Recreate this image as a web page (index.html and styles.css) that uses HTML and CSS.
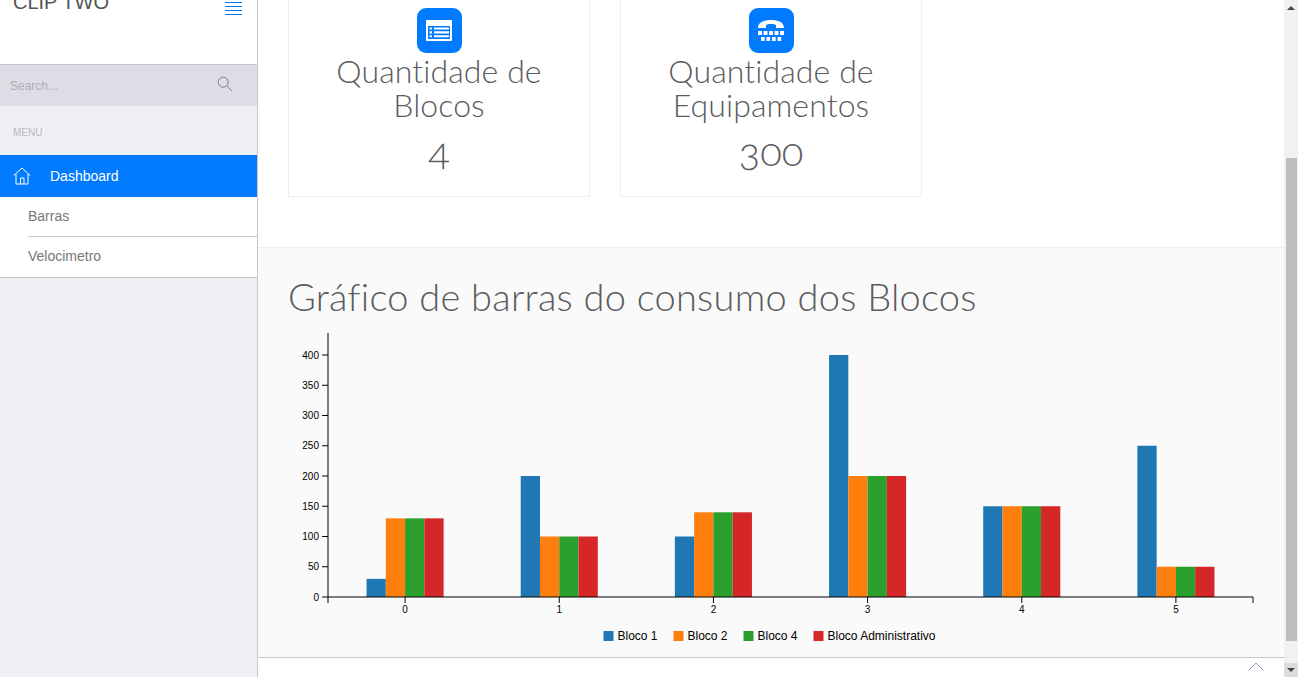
FILE: index.html
```html
<!DOCTYPE html>
<html lang="pt">
<head>
<meta charset="utf-8">
<title>Clip Two</title>
<link rel="stylesheet" href="styles.css">
</head>
<body>
<div class="app">
  <aside class="sidebar">
    <header class="brand">
      <span class="brand-name">CLIP TWO</span>
      <svg class="burger" width="17" height="15" viewBox="0 0 17 15"><path d="M0 .5h17M0 4.500h17M0 8.500h17M0 12.500h17" stroke="#007aff" fill="none"/></svg>
    </header>
    <div class="search">
      <span class="search-text">Search...</span>
      <svg class="search-icon" width="16" height="16" viewBox="0 0 16 16"><circle cx="6.2" cy="6.2" r="5" fill="none" stroke="#7f7f85"/><path d="M9.800 9.800l5 5" stroke="#7f7f85" fill="none"/></svg>
    </div>
    <div class="menu-label">MENU</div>
    <nav class="nav">
      <a class="nav-active">
        <svg class="home" width="18" height="18" viewBox="0 0 18 18"><path d="M.7 8.600L9 1l8.300 7.600M3 7v10h12V7M7.500 17v-6h3.500v6" fill="none" stroke="#fff"/></svg>
        Dashboard
      </a>
      <div class="sub">
        <a class="sub-item sub-first">Barras</a>
        <a class="sub-item">Velocimetro</a>
      </div>
    </nav>
  </aside>

  <main class="main">
    <section class="cards">
      <article class="card">
        <span class="badge">
          <svg width="26" height="21" viewBox="0 0 26 21"><path fill="#fff" fill-rule="evenodd" d="M1 0h24a1 1 0 011 1v19a1 1 0 01-1 1H1a1 1 0 01-1-1V1a1 1 0 011-1zm1 6v13h22V6z"/><path fill="#fff" d="M3.500 7.500H6v2H3.500zM8 7.500h15v2H8zM3.500 11.300H6v2.200H3.500zM8 11.300h15v2.200H8zM3.500 15.300H6v2H3.500zM8 15.300h15v2H8z"/></svg>
        </span>
        <h3 class="card-title">Quantidade de Blocos</h3>
        <p class="card-value">4</p>
      </article>
      <article class="card">
        <span class="badge">
          <svg width="26" height="21" viewBox="0 0 26 21"><path fill="#fff" d="M0 8C0 2 6 0 13 0s13 2 13 8h-8V5.500C18 4.500 16 4 13 4s-5 .5-5 1.500V8z"/><path fill="#fff" d="M0 11h4v4H0zM5.500 11h4v4h-4zM11 11h4v4h-4zM16.500 11h4v4h-4zM22 11h4v4h-4zM3 17h3.700v4H3zM8.500 17h3.700v4H8.500zM14 17h3.700v4H14zM19.500 17h3.700v4h-3.700z"/></svg>
        </span>
        <h3 class="card-title">Quantidade de Equipamentos</h3>
        <p class="card-value">300</p>
      </article>
    </section>

    <section class="chart-section">
      <h2 class="chart-title">Gráfico de barras do consumo dos Blocos</h2>
      <svg class="chart" id="chart" width="1026" height="329" viewBox="258 328 1026 329"></svg>
    </section>

    <footer class="footer">
      <svg width="16" height="9" viewBox="0 0 16 9"><path d="M.5 8.500L8 1l7.500 7.500" fill="none" stroke="#8a9fb5"/></svg>
    </footer>
  </main>

  <div class="scrollbar">
    <div class="scroll-btn"><span class="arrow-up"></span></div>
    <div class="scroll-thumb"></div>
    <div class="scroll-btn scroll-btn-down"><span class="arrow-down"></span></div>
  </div>
</div>
<script src="chart.js"></script>
</body>
</html>
```

FILE: styles.css
```css
* { box-sizing: border-box; }
html, body { margin: 0; height: 100%; overflow: hidden; }
body { font-family: "Liberation Sans", Arial, sans-serif; background: #fff; }
.app { display: flex; width: 1298px; height: 677px; overflow: hidden; }

.sidebar { width: 258px; flex: none; background: #f0eff4; border-right: 1px solid #c8c7cc; display: flex; flex-direction: column; }
.brand { height: 65px; flex: none; background: #fff; border-bottom: 1px solid #c8c7cc; display: flex; justify-content: space-between; align-items: flex-start; padding: 0 15px 0 13px; overflow: hidden; }
.brand-name { font-size: 20px; line-height: 24px; margin-top: -10px; color: #555; font-weight: 400; }
.burger { margin-top: 2px; }
.search { height: 41px; flex: none; background: #dddde5; display: flex; align-items: center; justify-content: space-between; padding: 0 24px 0 10px; }
.search-text { font-size: 12px; color: #aeaeb4; margin-top: 1px; }
.search-icon { margin-top: -4px; }
.menu-label { height: 49px; flex: none; padding: 21px 0 0 13px; font-size: 10px; line-height: 12px; color: #b9b9bd; }
.nav { display: flex; flex-direction: column; }
.nav-active { height: 42px; background: #007aff; color: #fff; font-size: 14px; display: flex; align-items: center; gap: 19px; padding-left: 13px; }
.home { margin-top: -1px; }
.sub { background: #fff; border-bottom: 1px solid #c8c7cc; display: flex; flex-direction: column; padding-left: 28px; }
.sub-item { height: 40px; font-size: 14px; color: #777; display: flex; align-items: center; padding-bottom: 2px; }
.sub-first { border-bottom: 1px solid #c8c7cc; }

.main { flex: 1; min-width: 0; display: flex; flex-direction: column; }
.cards { height: 248px; flex: none; background: #fff; border-bottom: 1px solid #eeeeee; display: flex; gap: 30px; padding: 0 30px; align-items: flex-start; overflow: hidden; }
.card { width: 302px; height: 197px; flex: none; border: 1px solid #eeeeee; border-top: 0; display: flex; flex-direction: column; align-items: center; padding: 8px 30px 0; text-align: center; font-family: Lato, sans-serif; color: #5b5b60; font-weight: 300; }
.badge { width: 45px; height: 45px; flex: none; border-radius: 9px; background: #007aff; display: flex; align-items: center; justify-content: center; }
.card-title { margin: 1px 0 0; font-size: 32px; line-height: 34px; font-weight: 300; letter-spacing: 0.1px; }
.card-value { margin: 9px 0 0; font-size: 40px; line-height: 40px; font-variant-numeric: oldstyle-nums; }

.chart-section { height: 410px; flex: none; background: #fafafa; border-bottom: 1px solid #c8c7cc; display: flex; flex-direction: column; overflow: hidden; }
.chart-title { flex: none; margin: 26px 0 0 30px; font-family: Lato, sans-serif; font-weight: 300; font-size: 38px; line-height: 44px; height: 54px; color: #5b5b60; letter-spacing: 0.25px; white-space: nowrap; }
.chart { display: block; flex: none; }
.chart text { font-family: "Liberation Sans", Arial, sans-serif; }

.footer { flex: 1; background: #fff; display: flex; justify-content: flex-end; align-items: flex-start; padding: 4px 20px 0 0; }

.scrollbar { width: 14px; flex: none; background: #f1f1f1; display: flex; flex-direction: column; }
.scroll-btn { height: 14px; flex: none; display: flex; align-items: center; justify-content: center; }
.scroll-btn-down { background: #dcdcdc; margin-top: 22px; }
.scroll-thumb { height: 483px; flex: none; margin: 144px 1px 0 2px; background: #bebebe; }
.arrow-up { width: 0; height: 0; border: 4px solid transparent; border-top: 0; border-bottom: 4px solid #444; margin-top: 1px; }
.arrow-down { width: 0; height: 0; border: 4px solid transparent; border-bottom: 0; border-top: 4px solid #444; }
```

FILE: chart.js
```js
(function () {
  var NS = 'http://www.w3.org/2000/svg';
  var svg = document.getElementById('chart');
  var colors = ['#1f77b4', '#ff7f0e', '#2ca02c', '#d62728'];
  var data = [
    [30, 130, 130, 130],
    [200, 100, 100, 100],
    [100, 140, 140, 140],
    [400, 200, 200, 200],
    [150, 150, 150, 150],
    [250, 50, 50, 50]
  ];
  var x0 = 328, x1 = 1253, y0 = 597, k = 242 / 400;
  var band = (x1 - x0) / 6, bw = band / 8;

  function el(name, attrs, text) {
    var e = document.createElementNS(NS, name);
    for (var a in attrs) e.setAttribute(a, attrs[a]);
    if (text !== undefined) e.textContent = text;
    svg.appendChild(e);
    return e;
  }

  data.forEach(function (g, i) {
    var start = x0 + band * i + band / 4;
    g.forEach(function (v, j) {
      el('rect', { x: start + j * bw, y: y0 - v * k, width: bw, height: v * k, fill: colors[j] });
    });
    var cx = x0 + band * (i + 0.5);
    el('path', { d: 'M' + cx + ' ' + y0 + 'v6', stroke: '#000', fill: 'none' });
    el('text', { x: cx, y: 613, 'font-size': 10, 'text-anchor': 'middle', fill: '#000' }, i);
  });

  for (var t = 0; t <= 400; t += 50) {
    var y = y0 - t * k;
    el('path', { d: 'M322 ' + y + 'H328', stroke: '#000', fill: 'none' });
    el('text', { x: 319, y: y + 3.5, 'font-size': 10, 'text-anchor': 'end', fill: '#000' }, t);
  }

  el('path', { d: 'M328 333V603M328 597H1253V603', stroke: '#000', fill: 'none' });

  var legend = [[603.5, 'Bloco 1'], [673.5, 'Bloco 2'], [743.5, 'Bloco 4'], [813.5, 'Bloco Administrativo']];
  legend.forEach(function (l, i) {
    el('rect', { x: l[0], y: 631, width: 10, height: 10, fill: colors[i] });
    el('text', { x: l[0] + 14, y: 640, 'font-size': 12, fill: '#000' }, l[1]);
  });
})();
```
